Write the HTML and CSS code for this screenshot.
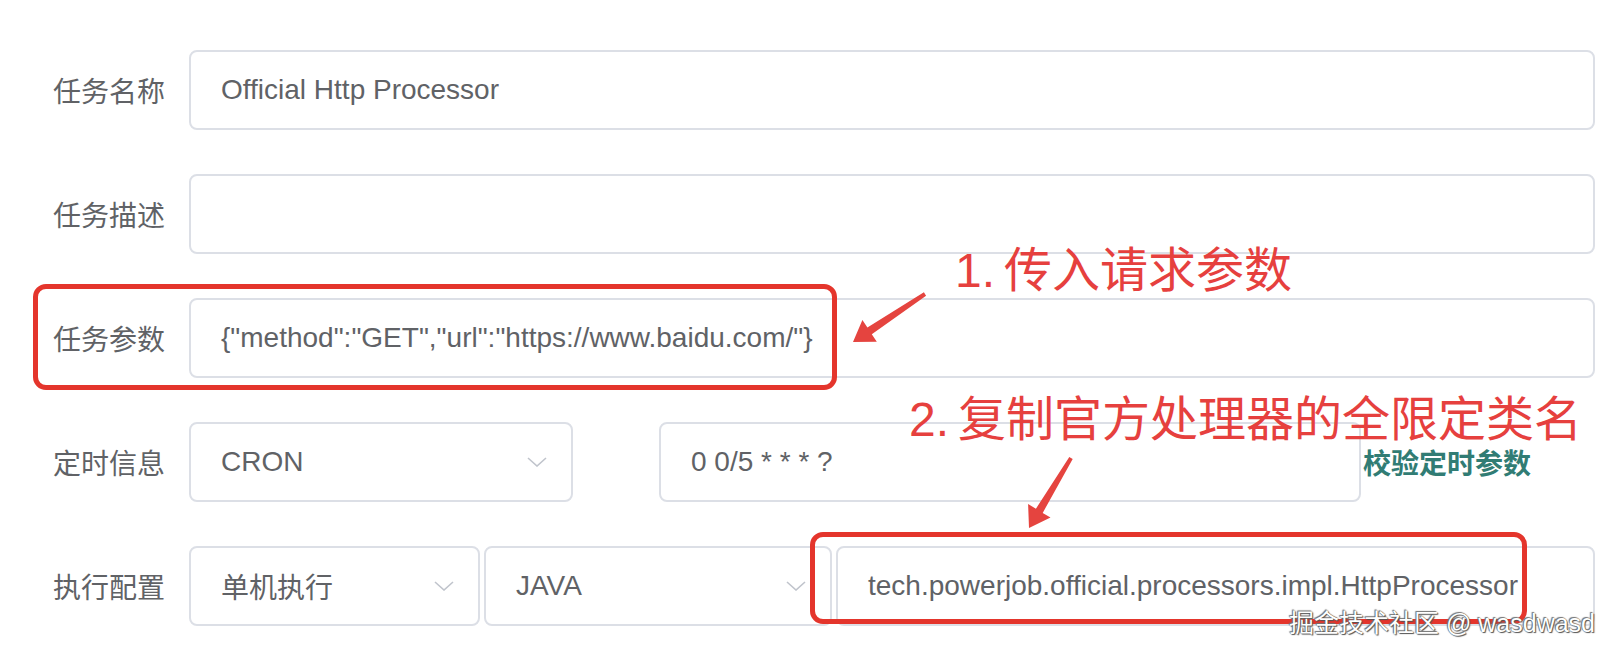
FILE: index.html
```html
<!DOCTYPE html>
<html lang="zh-CN">
<head>
  <meta charset="UTF-8">
  <meta name="viewport" content="width=device-width, initial-scale=1.0">
  <title>新建任务</title>
  <link rel="stylesheet" href="styles.css">
</head>
<body>
  <form class="job-form">
    <div class="form-item">
      <label class="form-label">任务名称</label>
      <div class="form-content">
        <div class="field grow">Official Http Processor</div>
      </div>
    </div>

    <div class="form-item">
      <label class="form-label">任务描述</label>
      <div class="form-content">
        <div class="field grow"></div>
      </div>
    </div>

    <div class="form-item">
      <label class="form-label">任务参数</label>
      <div class="form-content">
        <div class="field grow">{"method":"GET","url":"https://www.baidu.com/"}</div>
      </div>
    </div>

    <div class="form-item">
      <label class="form-label">定时信息</label>
      <div class="form-content">
        <div class="field select time-type">
          <span>CRON</span>
          <svg class="chevron" viewBox="0 0 20 10" width="20" height="10"><polyline points="1,1 10,9 19,1"></polyline></svg>
        </div>
        <div class="field time-expr">0 0/5 * * * ?</div>
        <a class="check-link">校验定时参数</a>
      </div>
    </div>

    <div class="form-item">
      <label class="form-label">执行配置</label>
      <div class="form-content tight">
        <div class="field select exec-type">
          <span>单机执行</span>
          <svg class="chevron" viewBox="0 0 20 10" width="20" height="10"><polyline points="1,1 10,9 19,1"></polyline></svg>
        </div>
        <div class="field select proc-type">
          <span>JAVA</span>
          <svg class="chevron" viewBox="0 0 20 10" width="20" height="10"><polyline points="1,1 10,9 19,1"></polyline></svg>
        </div>
        <div class="field grow">tech.powerjob.official.processors.impl.HttpProcessor</div>
      </div>
    </div>
  </form>

  <!-- annotations drawn over the screenshot -->
  <div class="mark-box box-params"></div>
  <div class="mark-box box-processor"></div>
  <div class="mark-text note-1"><span class="num">1.</span>传入请求参数</div>
  <div class="mark-text note-2"><span class="num">2.</span>复制官方处理器的全限定类名</div>
  <svg class="arrows" width="1616" height="656" viewBox="0 0 1616 656">
    <polygon points="923.9,292.3 867.4,327.6 862.4,320.1 853,342 876.8,341.7 871.8,334.2 926.1,295.7"></polygon>
    <polygon points="1069.3,457 1035.9,508.7 1028.1,504.1 1029,528 1050.5,517.5 1042.7,512.9 1072.7,459"></polygon>
  </svg>
  <div class="watermark">掘金技术社区 @ wasdwasd</div>
</body>
</html>
```

FILE: styles.css
```css
body {
  margin: 0;
  position: relative;
  width: 1616px;
  height: 656px;
  overflow: hidden;
  background: #fff;
  font-family: "Liberation Sans", "Noto Sans CJK SC", sans-serif;
}

.job-form {
  padding: 50px 21px 0 0;
}

.form-item {
  display: flex;
  align-items: center;
  height: 80px;
  margin-bottom: 44px;
}

.form-label {
  width: 189px;
  padding-right: 24px;
  box-sizing: border-box;
  text-align: right;
  font-size: 28px;
  color: #606266;
}

.form-content {
  flex: 1;
  display: flex;
  align-items: center;
}

.form-content.tight {
  gap: 4px;
}

.field {
  height: 80px;
  box-sizing: border-box;
  border: 2px solid #dcdfe6;
  border-radius: 8px;
  padding: 0 30px;
  display: flex;
  align-items: center;
  font-size: 28px;
  color: #606266;
  white-space: nowrap;
}

.grow {
  flex: 1;
}

.select {
  justify-content: space-between;
  padding-right: 24px;
}

.chevron polyline {
  fill: none;
  stroke: #c0c4cc;
  stroke-width: 1.6;
}

.time-type {
  width: 384px;
  margin-right: 86px;
}

.time-expr {
  width: 702px;
}

.check-link {
  margin-left: 2px;
  font-size: 28px;
  font-weight: bold;
  color: #317c74;
}

.exec-type {
  width: 291px;
}

.proc-type {
  width: 348px;
}

.mark-box {
  position: absolute;
  border: 5px solid #e4352c;
  border-radius: 13px;
  box-sizing: border-box;
}

.box-params {
  left: 33px;
  top: 284px;
  width: 804px;
  height: 106px;
}

.box-processor {
  left: 810px;
  top: 532px;
  width: 717px;
  height: 92px;
}

.mark-text {
  position: absolute;
  font-size: 48px;
  line-height: 48px;
  color: #e6403e;
  white-space: nowrap;
}

.mark-text .num {
  margin-right: 9px;
}

.note-1 {
  left: 955px;
  top: 247px;
}

.note-2 {
  left: 909px;
  top: 396px;
}

.arrows {
  position: absolute;
  left: 0;
  top: 0;
}

.arrows polygon {
  fill: #e5443f;
}

.watermark {
  position: absolute;
  right: 21px;
  top: 610px;
  font-size: 25px;
  line-height: 26px;
  color: #fff;
  white-space: nowrap;
  text-shadow: 0 0 1px #444, 1px 1px 1px #555, -1px -1px 1px #777;
}
```
